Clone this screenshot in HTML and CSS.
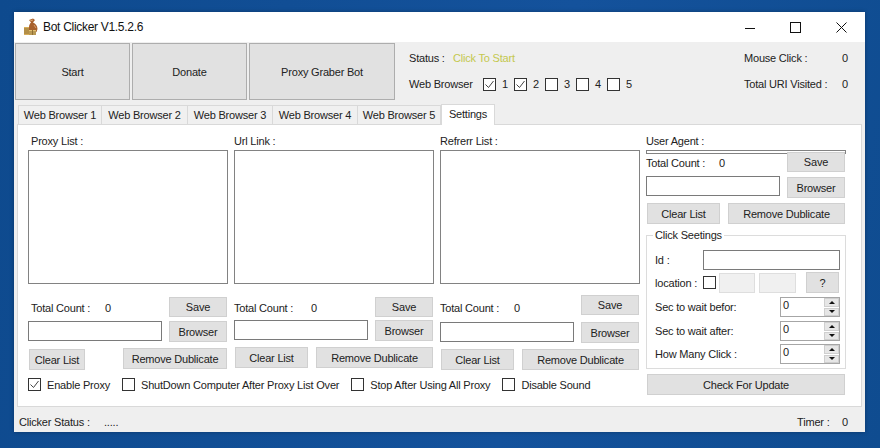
FILE: index.html
```html
<!DOCTYPE html>
<html lang="en">
<head>
<meta charset="UTF-8">
<meta name="viewport" content="width=device-width, initial-scale=1.0">
<title>Bot Clicker V1.5.2.6</title>
<link rel="stylesheet" href="styles.css">
</head>
<body>

<div class="window">

  <!-- Title bar -->
  <div class="titlebar">
    <svg class="app-icon" width="16" height="18" viewBox="0 0 16 18">
      <path d="M6 2l4-1.500 2 1.500-2 2.500c2.500 1 4.500 3.500 4.500 6.500l-1 3H6V9c0-2 1-3.500 2-4.500z" fill="#a8602c"/>
      <path d="M7 3l3-1M11 7l2 3" stroke="#d9a070" stroke-width="1" fill="none"/>
      <rect x="1" y="9" width="5" height="8" fill="#d8ae5a"/>
      <rect x="6" y="12" width="7" height="5" fill="#e4c274"/>
      <path d="M1 11h5M1 13h5M1 15h5M6 14h7M6 16h7M9.500 12v5" stroke="#8f7034" stroke-width="1"/>
    </svg>
    <span class="app-title">Bot Clicker V1.5.2.6</span>
    <div class="win-controls">
      <svg width="10" height="10" viewBox="0 0 10 10"><path d="M0 6.500h10" stroke="#111" stroke-width="1"/></svg>
      <svg width="11" height="11" viewBox="0 0 11 11"><rect x="0.5" y="0.5" width="10" height="10" fill="none" stroke="#111"/></svg>
      <svg width="11" height="11" viewBox="0 0 11 11"><path d="M0.500 0.500l10 10M10.500 0.500l-10 10" stroke="#111" stroke-width="1"/></svg>
    </div>
  </div>

  <!-- Top buttons and status -->
  <div class="toolbar">
    <button class="big-btn start-btn">Start</button>
    <button class="big-btn donate-btn">Donate</button>
    <button class="big-btn proxy-btn">Proxy Graber Bot</button>

    <div class="status-block">
      <div class="status-row">
        <span class="status-label">Status :</span>
        <span class="status-value">Click To Start</span>
      </div>
      <div class="status-row">
        <span class="status-label">Web Browser</span>
        <label class="browser-check"><span class="box"><svg width="11" height="11" viewBox="0 0 11 11"><path d="M1.500 5.500l3 3 5-6.500" fill="none" stroke="#444" stroke-width="1"/></svg></span>1</label>
        <label class="browser-check"><span class="box"><svg width="11" height="11" viewBox="0 0 11 11"><path d="M1.500 5.500l3 3 5-6.500" fill="none" stroke="#444" stroke-width="1"/></svg></span>2</label>
        <label class="browser-check"><span class="box"></span>3</label>
        <label class="browser-check"><span class="box"></span>4</label>
        <label class="browser-check"><span class="box"></span>5</label>
      </div>
    </div>

    <div class="counter-block">
      <div class="counter-row"><span>Mouse Click :</span><span>0</span></div>
      <div class="counter-row"><span>Total URI Visited :</span><span>0</span></div>
    </div>
  </div>

  <!-- Tabs -->
  <div class="tabs">
    <div class="tab tab-one">Web Browser 1</div>
    <div class="tab tab-two">Web Browser 2</div>
    <div class="tab">Web Browser 3</div>
    <div class="tab">Web Browser 4</div>
    <div class="tab tab-five">Web Browser 5</div>
    <div class="tab tab-active">Settings</div>
  </div>

  <div class="panel">
    <div class="left-area">
      <div class="columns">

        <div class="col col-proxy">
          <div class="col-label">Proxy List :</div>
          <textarea class="list-box"></textarea>
          <div class="count-row"><span class="count-label">Total Count :</span><span>0</span><button class="btn save-btn">Save</button></div>
          <div class="file-row"><input class="text-box" type="text"><button class="btn browse-btn">Browser</button></div>
          <div class="edit-row"><button class="btn clear-btn">Clear List</button><button class="btn remove-btn">Remove Dublicate</button></div>
        </div>

        <div class="col col-url">
          <div class="col-label">Url Link :</div>
          <textarea class="list-box"></textarea>
          <div class="count-row"><span class="count-label">Total Count :</span><span>0</span><button class="btn save-btn">Save</button></div>
          <div class="file-row"><input class="text-box" type="text"><button class="btn browse-btn">Browser</button></div>
          <div class="edit-row"><button class="btn clear-btn">Clear List</button><button class="btn remove-btn">Remove Dublicate</button></div>
        </div>

        <div class="col col-ref">
          <div class="col-label">Refrerr List :</div>
          <textarea class="list-box"></textarea>
          <div class="count-row"><span class="count-label">Total Count :</span><span>0</span><button class="btn save-btn">Save</button></div>
          <div class="file-row"><input class="text-box" type="text"><button class="btn browse-btn">Browser</button></div>
          <div class="edit-row"><button class="btn clear-btn">Clear List</button><button class="btn remove-btn">Remove Dublicate</button></div>
        </div>

      </div>

      <div class="options">
        <label class="option"><span class="box"><svg width="11" height="11" viewBox="0 0 11 11"><path d="M1.500 5.500l3 3 5-6.500" fill="none" stroke="#444" stroke-width="1"/></svg></span>Enable Proxy</label>
        <label class="option"><span class="box"></span>ShutDown Computer After Proxy List Over</label>
        <label class="option"><span class="box"></span>Stop After Using All Proxy</label>
        <label class="option"><span class="box"></span>Disable Sound</label>
      </div>
    </div>

    <div class="col col-agent">
      <div class="col-label">User Agent :</div>
      <div class="list-box squashed"></div>
      <div class="count-row"><span class="count-label">Total Count :</span><span>0</span><button class="btn save-btn">Save</button></div>
      <div class="file-row"><input class="text-box" type="text"><button class="btn browse-btn">Browser</button></div>
      <div class="edit-row"><button class="btn clear-btn">Clear List</button><button class="btn remove-btn">Remove Dublicate</button></div>

      <fieldset class="click-group">
        <legend>Click Seetings</legend>
        <div class="group-row id-row">
          <span class="short-label">Id :</span>
          <input class="text-box id-box" type="text">
        </div>
        <div class="group-row location-row">
          <span class="short-label">location :</span>
          <span class="box"></span>
          <span class="coord"></span>
          <span class="coord"></span>
          <button class="btn help-btn">?</button>
        </div>
        <div class="group-row spin-row">
          <span class="long-label">Sec to wait befor:</span>
          <div class="spinner"><span class="spin-value">0</span><div class="spin-arrows"><span class="arrow-up"></span><span class="arrow-down"></span></div></div>
        </div>
        <div class="group-row spin-row">
          <span class="long-label">Sec to wait after:</span>
          <div class="spinner"><span class="spin-value">0</span><div class="spin-arrows"><span class="arrow-up"></span><span class="arrow-down"></span></div></div>
        </div>
        <div class="group-row spin-row">
          <span class="long-label">How Many Click :</span>
          <div class="spinner"><span class="spin-value">0</span><div class="spin-arrows"><span class="arrow-up"></span><span class="arrow-down"></span></div></div>
        </div>
      </fieldset>

      <button class="btn update-btn">Check For Update</button>
    </div>
  </div>

  <!-- Status bar -->
  <div class="statusbar">
    <span class="clicker-label">Clicker Status :</span>
    <span class="clicker-value">.....</span>
    <span class="timer-label">Timer :</span>
    <span>0</span>
  </div>

</div>

</body>
</html>
```

FILE: styles.css
```css
* {
  box-sizing: border-box;
}

body {
  margin: 0;
  height: 448px;
  overflow: hidden;
  padding: 12px 0 0 14px;
  background: linear-gradient(100deg, #0e4a8e, #14529c 60%, #0f4c90);
  font-family: "Liberation Sans", Arial, sans-serif;
  font-size: 11px;
  letter-spacing: -0.2px;
  color: #222;
}

/* Window */
.window {
  width: 851px;
  height: 420px;
  background-color: #efefef;
  box-shadow: 0 0 4px rgba(0, 0, 0, 0.3);
}

/* Title bar */
.titlebar {
  display: flex;
  align-items: center;
  height: 30px;
  padding-left: 9px;
  background-color: #fff;
}

.app-icon {
  margin-right: 4px;
}

.app-title {
  font-size: 12px;
  letter-spacing: -0.3px;
  color: #111;
}

.win-controls {
  display: flex;
  align-items: center;
  gap: 35px;
  margin-left: auto;
  padding-right: 18px;
}

/* Toolbar */
.toolbar {
  display: flex;
  height: 58px;
  padding: 1px 0 0 1px;
}

button {
  font: inherit;
  letter-spacing: inherit;
  color: inherit;
  padding: 0;
}

.big-btn {
  height: 57px;
  margin-right: 2px;
  background-color: #e1e1e1;
  border: 1px solid #adadad;
}

.start-btn,
.donate-btn {
  width: 115px;
}

.proxy-btn {
  width: 146px;
  margin-right: 0;
}

.status-block {
  margin-left: 14px;
  padding-top: 2px;
}

.status-row {
  display: flex;
  align-items: center;
  height: 26px;
}

.status-label {
  width: 44px;
  white-space: nowrap;
}

.status-value {
  color: #c4c84e;
}

.browser-check {
  display: flex;
  align-items: center;
  gap: 6px;
  width: 31px;
}

.status-row .status-label + .browser-check {
  margin-left: 30px;
}

.box {
  display: flex;
  align-items: center;
  justify-content: center;
  flex: none;
  width: 13px;
  height: 13px;
  background-color: #fff;
  border: 1px solid #333;
}

.counter-block {
  margin-left: auto;
  padding: 2px 17px 0 0;
}

.counter-row {
  display: flex;
  justify-content: space-between;
  align-items: center;
  width: 104px;
  height: 26px;
}

/* Tabs */
.tabs {
  display: flex;
  align-items: flex-end;
  height: 24px;
  padding-left: 4px;
}

.tab {
  width: 85px;
  height: 19px;
  padding-top: 3px;
  text-align: center;
  background-color: #f0f0f0;
  border: 1px solid #d9d9d9;
  border-bottom: none;
  border-left: none;
}

.tab-one {
  width: 84px;
  border-left: 1px solid #d9d9d9;
}

.tab-two {
  width: 86px;
}

.tab-five {
  width: 83px;
}

.tab-active {
  position: relative;
  width: 54px;
  height: 21px;
  margin-bottom: -1px;
  background-color: #fff;
  border-left: 1px solid #d9d9d9;
  z-index: 1;
}

/* Settings panel */
.panel {
  display: flex;
  gap: 6px;
  width: 845px;
  height: 283px;
  margin-left: 3px;
  padding: 9px 0 0 10px;
  background-color: #fff;
  border: 1px solid #d9d9d9;
}

.left-area {
  width: 612px;
}

.columns {
  display: flex;
  gap: 6px;
}

.col {
  width: 200px;
}

.col-label {
  height: 14px;
  line-height: 14px;
}

.col-proxy .col-label {
  padding-left: 3px;
}

.list-box {
  display: block;
  width: 200px;
  height: 134px;
  margin: 2px 0 0;
  padding: 0;
  resize: none;
  background-color: #fff;
  border: 1px solid #828282;
}

.list-box.squashed {
  height: 4px;
}

.count-row {
  display: flex;
  align-items: center;
  height: 20px;
  margin-top: 13px;
  padding-right: 1px;
}

.count-label {
  width: 74px;
  padding: 0;
}

.col-proxy .count-label {
  width: 77px;
  padding-left: 3px;
}

.col-url .count-label {
  width: 77px;
}

.col-ref .count-row {
  margin-top: 11px;
}

.col-ref .count-row > span {
  padding-top: 6px;
}

.col-proxy .count-row > span,
.col-url .count-row > span,
.col-agent .count-row > span {
  padding-top: 2px;
}

.col-agent .count-row {
  margin-top: -2px;
}

.col-agent .count-label {
  width: 73px;
}

.btn {
  background-color: #e1e1e1;
  border: 1px solid #d0d0d0;
}

.save-btn {
  width: 58px;
  height: 20px;
  margin-left: auto;
  padding-bottom: 1px;
}

.file-row {
  display: flex;
  gap: 7px;
  height: 21px;
  margin-top: 4px;
}

.col-url .file-row {
  margin-top: 3px;
}

.col-ref .file-row {
  margin-top: 7px;
}

.col-agent .file-row {
  height: 22px;
}

.col-agent .browse-btn {
  margin-top: 1px;
}

.text-box {
  width: 134px;
  height: 20px;
  padding: 0;
  background-color: #fff;
  border: 1px solid #7a7a7a;
}

.browse-btn {
  width: 58px;
  height: 21px;
}

.edit-row {
  display: flex;
  justify-content: space-between;
  height: 21px;
  margin-top: 6px;
  padding: 0 1px;
}

.col-agent .edit-row {
  margin-top: 5px;
}

.clear-btn {
  width: 73px;
  height: 21px;
}

.remove-btn {
  width: 117px;
  height: 21px;
}

.col-proxy .clear-btn {
  width: 56px;
  margin-top: 1px;
}

.col-proxy .remove-btn {
  width: 104px;
}

/* Bottom checkboxes */
.options {
  display: flex;
  gap: 12px;
  margin-top: 8px;
}

.option {
  display: flex;
  align-items: center;
  gap: 6px;
  height: 13px;
  white-space: nowrap;
}

/* Click settings group */
.click-group {
  width: 200px;
  height: 141px;
  margin: 4px 0 0;
  padding: 0 5px 0 8px;
  border: 1px solid #dcdcdc;
}

.click-group legend {
  margin-left: -2px;
  padding: 0 2px;
  line-height: 14px;
}

.group-row {
  display: flex;
  align-items: center;
}

.short-label {
  width: 48px;
  flex: none;
}

.long-label {
  width: 125px;
  flex: none;
}

.id-row {
  height: 20px;
  margin-top: 8px;
}

.id-box {
  width: 137px;
}

.location-row {
  height: 21px;
  margin-top: 2px;
}

.coord {
  width: 36px;
  height: 20px;
  margin-left: 3px;
  background-color: #f0f0f0;
  border: 1px solid #dedede;
}

.coord + .coord {
  width: 37px;
  margin-left: 4px;
}

.help-btn {
  width: 33px;
  height: 21px;
  margin-left: 10px;
}

.spin-row {
  height: 20px;
  margin-top: 4px;
}

.spin-row:last-child {
  margin-top: 3px;
}

.spinner {
  display: flex;
  width: 60px;
  height: 20px;
  padding-left: 2px;
  background-color: #fff;
  border: 1px solid #a6a6a6;
}

.spin-value {
  flex: 1;
  line-height: 14px;
}

.spin-arrows {
  display: flex;
  flex-direction: column;
  gap: 1px;
  width: 15px;
}

.arrow-up,
.arrow-down {
  display: flex;
  align-items: center;
  justify-content: center;
  flex: 1;
  background-color: #e6e6e6;
  border: 1px solid #cfcfcf;
}

.arrow-up::before {
  content: "";
  border: 3px solid transparent;
  border-top: none;
  border-bottom: 3px solid #111;
}

.arrow-down::before {
  content: "";
  border: 3px solid transparent;
  border-bottom: none;
  border-top: 3px solid #111;
}

.update-btn {
  display: block;
  width: 198px;
  height: 21px;
  margin: 5px 0 0 1px;
}

/* Status bar */
.statusbar {
  display: flex;
  align-items: center;
  height: 25px;
  padding: 5px 17px 0 5px;
}

.clicker-label {
  width: 85px;
}

.timer-label {
  width: 45px;
  margin-left: auto;
}
```
